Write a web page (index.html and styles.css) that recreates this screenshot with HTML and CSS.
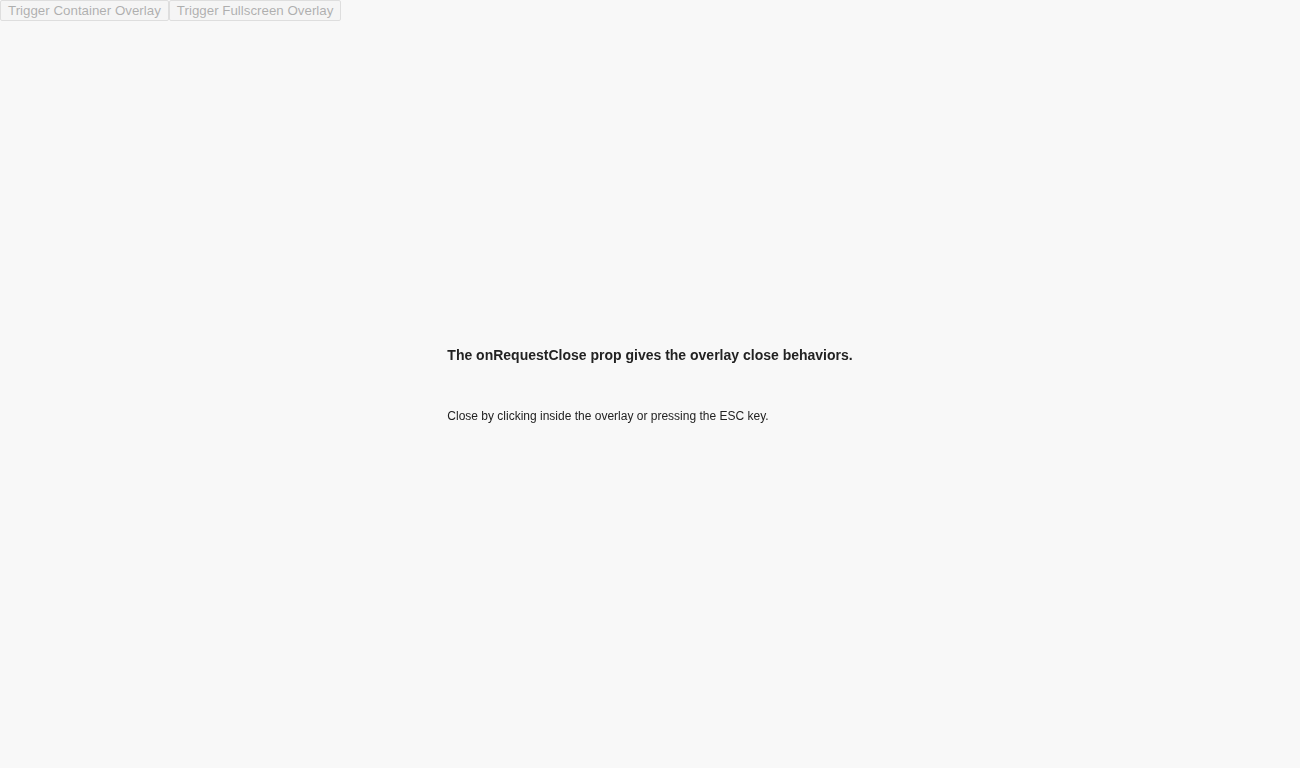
FILE: index.html
```html
<!DOCTYPE html>
<html>
<head>
<meta charset="utf-8">
<link rel="stylesheet" href="styles.css">
</head>
<body>
<div class="toolbar">
  <button class="trigger">Trigger Container Overlay</button><button class="trigger">Trigger Fullscreen Overlay</button>
</div>
<div class="overlay">
  <div class="overlay-content">
    <h4 class="title">The onRequestClose prop gives the overlay close behaviors.</h4>
    <p class="note">Close by clicking inside the overlay or pressing the ESC key.</p>
  </div>
</div>
</body>
</html>
```

FILE: styles.css
```css
html, body {
  margin: 0;
  padding: 0;
  background: #f8f8f8;
  font-family: "Liberation Sans", Arial, sans-serif;
}
.toolbar {
  display: flex;
}
.trigger {
  font-family: "Liberation Sans", Arial, sans-serif;
  font-size: 13.333px;
  padding: 2px 7px;
  margin: 0;
  background: #efefef;
  border: 1px solid #a0a0a0;
  border-radius: 2px;
  color: #000;
  line-height: 15px;
}
.overlay {
  position: fixed;
  inset: 0;
  background: rgba(248, 248, 248, 0.7);
  display: flex;
  align-items: center;
  justify-content: center;
}
.overlay-content {
  color: #222;
  padding-top: 2px;
}
.title {
  margin: 0;
  font-size: 14px;
  font-weight: bold;
  line-height: 16px;
}
.note {
  margin: 46px 0 0;
  font-size: 12px;
  line-height: 14px;
}
```
